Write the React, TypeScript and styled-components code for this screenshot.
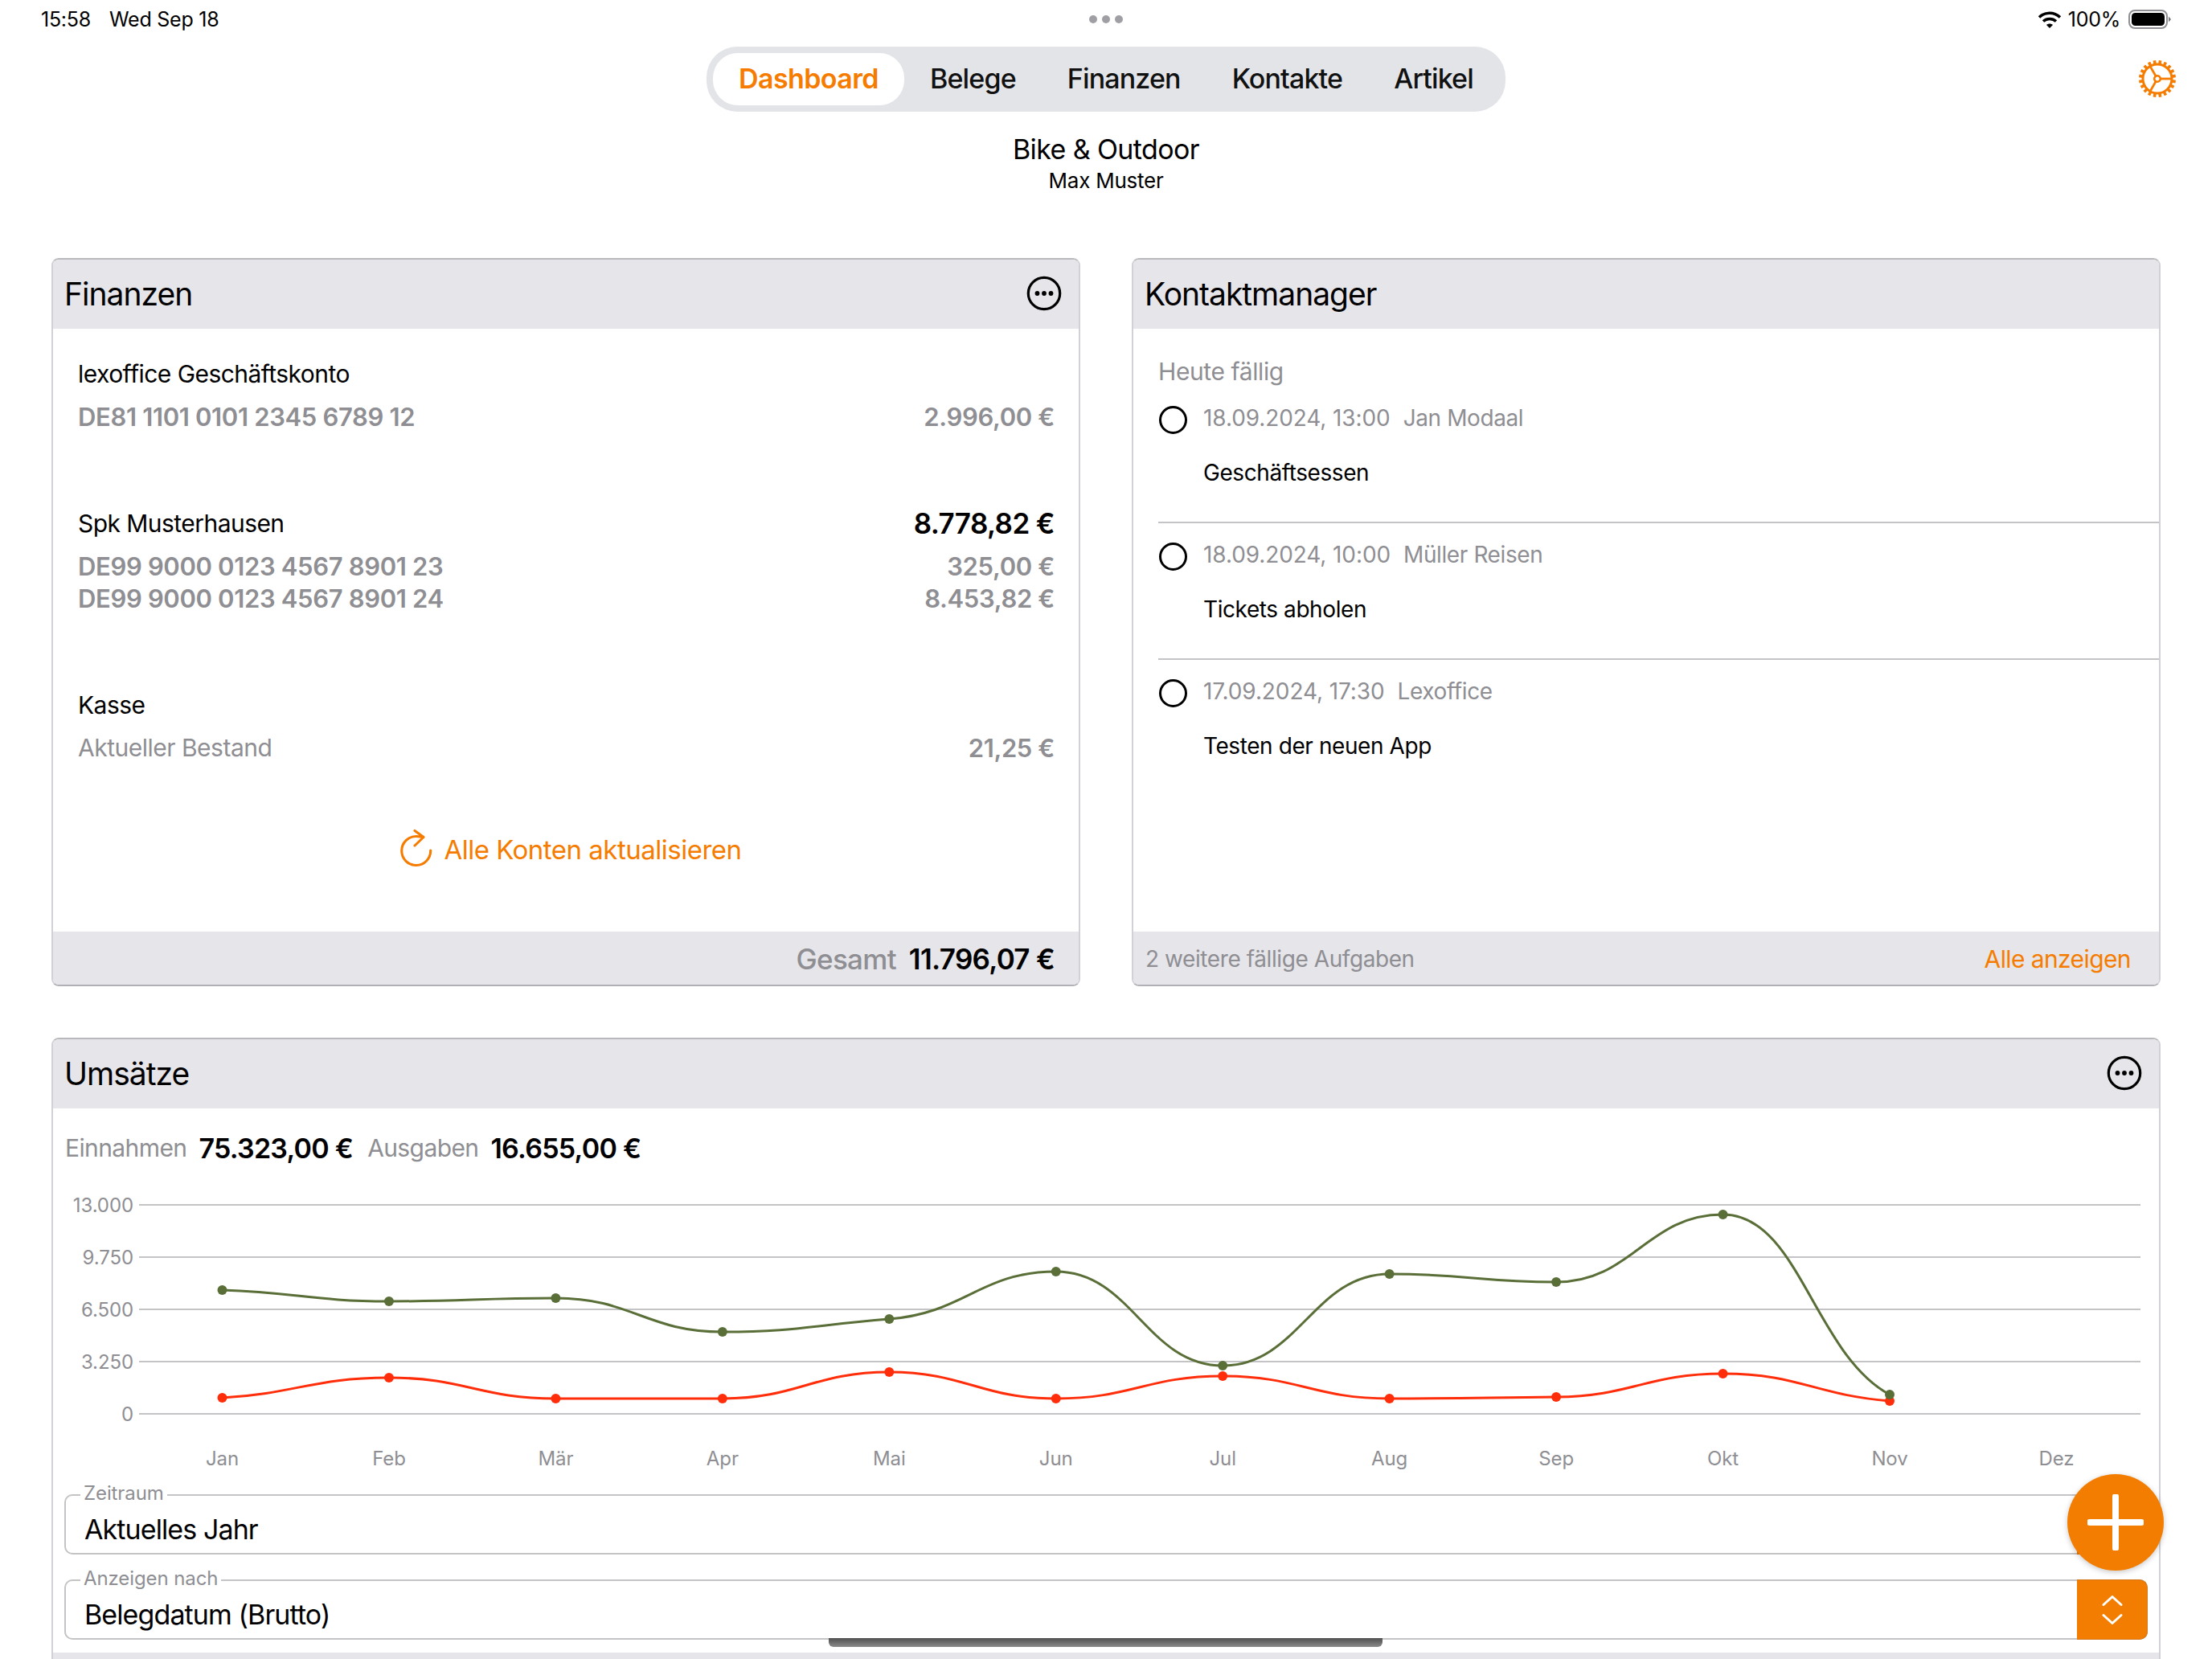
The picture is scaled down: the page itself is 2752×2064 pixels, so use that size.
import React from "react";
import styled, { createGlobalStyle } from "styled-components";

const ORANGE = "#f57c00";
const GREY = "#8e8e93";
const BAND = "#e5e5ea";
const LINE = "#c4c4c6";

const Global = createGlobalStyle`
  html, body { margin: 0; padding: 0; background: #fff; }
  body { font-family: Inter, "Liberation Sans", sans-serif; color: #000; }
  * { box-sizing: border-box; }
`;

const Page = styled.div`
  position: relative; width: 2752px; height: 2064px; overflow: hidden; background: #fff;
`;

const StatusBar = styled.div`
  display: flex; align-items: center; justify-content: space-between; height: 48px; padding: 0 50px 0 51px; position: relative;
`;
const StatusText = styled.span<{ $gap?: number }>`
  font-size: 25px; font-weight: 400; letter-spacing: -0.25px; line-height: 48px; margin-right: ${p => p.$gap ?? 0}px;
`;
const StatusGroup = styled.div`
  display: flex; align-items: center;
`;
const Dots = styled.div`
  position: absolute; left: 1355px; top: 19px; display: flex; gap: 6px;
`;
const Dot = styled.span`
  width: 10px; height: 10px; border-radius: 50%; background: #a0a0a4;
`;

const NavRow = styled.div`
  position: relative; display: flex; justify-content: center; margin-top: 10px; height: 81px;
`;
const Nav = styled.nav`
  display: flex; align-items: center; height: 81px; padding: 0 8px; background: #e3e4e8; border-radius: 38px;
`;
const NavItem = styled.div<{ $active?: boolean }>`
  height: 65px; display: flex; align-items: center; padding: 0 32px 2px; border-radius: 31px;
  font-size: 34px; font-weight: ${p => (p.$active ? 600 : 500)}; letter-spacing: ${p => (p.$active ? -0.6 : -0.85)}px;
  color: ${p => (p.$active ? ORANGE : "#111")};
  background: ${p => (p.$active ? "#fff" : "transparent")};
`;
const GearSlot = styled.div`
  position: absolute; right: 43px; top: 15px; width: 50px; height: 50px;
`;

const Company = styled.div`
  margin-top: 25px; text-align: center;
`;
const CompanyName = styled.div`
  font-size: 34px; line-height: 44px; font-weight: 400; letter-spacing: -0.6px;
`;
const Person = styled.div`
  margin-top: 1px; font-size: 26px; line-height: 32px; letter-spacing: -0.25px;
`;

const PanelGrid = styled.div`
  display: grid; grid-template-columns: 1fr 1fr; gap: 64px; margin-top: 80px; padding: 0 64px;
`;
const Panel = styled.section<{ $h?: number }>`
  display: flex; flex-direction: column; ${p => (p.$h ? `height: ${p.$h}px;` : "")}
  border: 2px solid #d1d1d6; border-top-color: #b9b9bd; border-bottom-color: #b0b0b6; border-radius: 9px; overflow: hidden; background: #fff;
`;
const WidePanel = styled(Panel)`
  margin: 64px 64px 0; border-bottom: 0;
`;
const PanelHead = styled.header`
  flex: none; display: flex; align-items: center; justify-content: space-between; height: 86px; padding: 0 21px 2px 14px; background: ${BAND};
`;
const PanelTitle = styled.h2`
  margin: 0; font-size: 39px; font-weight: 400; letter-spacing: -1px;
`;
const PanelFoot = styled.footer`
  flex: none; margin-top: auto; display: flex; align-items: center; justify-content: space-between; height: 66px; padding: 2px 30px 0 15px; background: ${BAND};
`;

const AccountsBody = styled.div`
  padding: 23px 30px 0 31px; display: flex; flex-direction: column; gap: 80px;
`;
const Account = styled.div``;
const AccountHead = styled.div`
  display: flex; justify-content: space-between; align-items: center; height: 66px;
`;
const AccountName = styled.span`
  font-size: 30px; letter-spacing: -0.55px;
`;
const Balance = styled.span`
  font-size: 35px; font-weight: 600; letter-spacing: -0.6px;
`;
const AccountLine = styled.div<{ $light?: boolean }>`
  display: flex; justify-content: space-between; align-items: center; height: 40px;
  font-size: ${p => (p.$light ? 30 : 31)}px; font-weight: ${p => (p.$light ? 400 : 600)}; color: ${GREY};
  letter-spacing: ${p => (p.$light ? -0.5 : -0.35)}px;
`;
const AccountAmount = styled.span`
  font-size: 31px; font-weight: 600; letter-spacing: -0.4px;
`;
const RefreshRow = styled.div`
  display: flex; align-items: center; justify-content: center; gap: 13px; height: 60px; margin-top: 77px; padding-left: 12px;
  font-size: 33px; color: ${ORANGE}; letter-spacing: -0.5px;
`;
const TotalWrap = styled.div`
  margin-left: auto; display: flex; align-items: center; gap: 16px; font-size: 35px; letter-spacing: -0.7px;
`;
const TotalLabel = styled.span`
  font-weight: 500; color: ${GREY};
`;
const TotalValue = styled.span`
  font-weight: 600;
`;

const TasksBody = styled.div`
  padding: 33px 0 0 31px;
`;
const TasksHead = styled.div`
  height: 39px; line-height: 40px; font-size: 30px; color: ${GREY}; letter-spacing: -0.4px;
`;
const Task = styled.div<{ $last?: boolean }>`
  padding: 19px 0 ${p => (p.$last ? 0 : 41)}px;
  border-bottom: ${p => (p.$last ? "0" : `2px solid ${LINE}`)};
`;
const TaskTop = styled.div`
  display: flex; align-items: center; gap: 20px; height: 40px;
`;
const TaskCircle = styled.span`
  flex: none; width: 35px; height: 35px; margin: 4px 0 0 1px; border-radius: 50%; border: 3.5px solid #000;
`;
const TaskMeta = styled.span`
  font-size: 28px; color: ${GREY}; letter-spacing: -0.1px;
`;
const TaskWho = styled.span`
  margin-left: 16px; letter-spacing: -0.4px;
`;
const TaskText = styled.div`
  margin: 28px 0 0 56px; height: 40px; line-height: 40px; font-size: 28px; letter-spacing: -0.42px;
`;
const FootNote = styled.span`
  font-size: 28px; color: ${GREY}; letter-spacing: -0.42px;
`;
const FootLink = styled.span`
  font-size: 30px; color: ${ORANGE}; letter-spacing: -0.6px;
  margin-right: 5px;
`;

const Summary = styled.div`
  display: flex; align-items: center; height: 50px; margin: 24px 0 0 15px;
`;
const SumLabel = styled.span`
  font-size: 30px; color: ${GREY}; letter-spacing: -0.6px; margin-right: 15px;
`;
const SumValue = styled.span`
  font-size: 34px; font-weight: 600; letter-spacing: -0.75px; margin-right: 18px;
`;
const ChartSvg = styled.svg`
  display: block; margin-top: 17px; width: 2620px; height: 370px;
`;
const AxisText = styled.text`
  font-family: Inter, "Liberation Sans", sans-serif; font-size: 24px; fill: ${GREY}; letter-spacing: -0.1px;
`;

const Field = styled.div<{ $top: number }>`
  position: relative; display: flex; align-items: stretch; height: 75px;
  margin: ${p => p.$top}px 14px 0 14px; border: 2px solid ${LINE}; border-radius: 10px;
`;
const FieldLabel = styled.span`
  position: absolute; left: 18px; top: -18px; padding: 0 4px; background: #fff; line-height: 30px;
  font-size: 24px; color: ${GREY}; letter-spacing: -0.1px;
`;
const FieldValue = styled.div`
  flex: 1; padding: 12px 0 0 23px; line-height: 60px; font-size: 34px; letter-spacing: -0.9px; height: 71px;
`;
const SelectBtn = styled.div`
  flex: none; width: 88px; margin: -2px -2px -2px 0; display: flex; align-items: center; justify-content: center;
  background: #f27d00; border-radius: 0 10px 10px 0; border: 1px solid #d2781a; border-left: 0;
`;
const WideSpacer = styled.div`
  height: 16px;
`;
const WideFoot = styled.div`
  height: 30px; background: ${BAND};
`;
const Fab = styled.button`
  position: absolute; left: 2572px; top: 1834px; width: 120px; height: 120px; padding: 0; border: 0; border-radius: 50%;
  background: #f27d00; box-shadow: 0 2px 7px rgba(0,0,0,.22); display: flex; align-items: center; justify-content: center;
`;
const HomeBar = styled.div`
  position: absolute; left: 1031px; top: 2038px; width: 689px; height: 11px; border-radius: 0 0 6px 6px;
  background: linear-gradient(#505050, #8a8a8a);
`;

const StatusIcons = () => (
  <>
    <svg width="30" height="22" viewBox="0 0 30 22" style={{ marginRight: 8 }} aria-hidden>
      <g fill="none" stroke="#000" strokeWidth="3.6">
        <path d="M2 8.5C9.5 1.5 20.5 1.5 28 8.5" />
        <path d="M7 13.5C11.5 9.5 18.5 9.5 23 13.5" />
      </g>
      <path d="M11 18C13.2 16 16.8 16 19 18L15 22Z" fill="#000" />
    </svg>
    <StatusText $gap={10}>100%</StatusText>
    <svg width="54" height="24" viewBox="0 0 54 24" aria-hidden>
      <rect x="1" y="1" width="47" height="22" rx="7" fill="none" stroke="#8e8e93" strokeWidth="2" />
      <rect x="4" y="4" width="41" height="16" rx="4.5" fill="#000" />
      <path d="M50 8.5L53 12L50 15.5Z" fill="#777" />
    </svg>
  </>
);

const Gear = () => {
  const teeth = Array.from({ length: 20 }, (_, i) => i * 18);
  const rad = (d: number) => (d * Math.PI) / 180;
  return (
    <svg width="50" height="50" viewBox="-25 -25 50 50" aria-hidden>
      <g stroke={ORANGE} fill="none">
        <circle r="18" strokeWidth="3" />
        <circle r="3.8" strokeWidth="2.6" />
        {teeth.map(a => (
          <line key={a} x1={18 * Math.cos(rad(a + 9))} y1={18 * Math.sin(rad(a + 9))} x2={23 * Math.cos(rad(a + 9))} y2={23 * Math.sin(rad(a + 9))} strokeWidth="3.6" />
        ))}
        {[0, 120, 240].map(a => (
          <line key={a} x1={4 * Math.cos(rad(a))} y1={4 * Math.sin(rad(a))} x2={18 * Math.cos(rad(a))} y2={18 * Math.sin(rad(a))} strokeWidth="2.8" />
        ))}
      </g>
    </svg>
  );
};

const MoreIcon = () => (
  <svg width="44" height="44" viewBox="0 0 44 44" aria-hidden>
    <circle cx="22" cy="22" r="19.7" fill="none" stroke="#000" strokeWidth="3.2" />
    <circle cx="13.5" cy="22" r="2.9" />
    <circle cx="22" cy="22" r="2.9" />
    <circle cx="30.5" cy="22" r="2.9" />
  </svg>
);

const RefreshIcon = () => (
  <svg width="42" height="50" viewBox="0 0 42 50" style={{ marginTop: -2 }} aria-hidden>
    <path d="M38.7 27A18 18 0 1 1 21 9.5L30 10.5M19 2.5L30 10.5L19 21" fill="none" stroke={ORANGE} strokeWidth="3.1" strokeLinecap="round" strokeLinejoin="round" />
  </svg>
);

const monotone = (pts: [number, number][]) => {
  const n = pts.length;
  const dx = pts.slice(1).map((p, i) => p[0] - pts[i][0]);
  const s = pts.slice(1).map((p, i) => (p[1] - pts[i][1]) / dx[i]);
  const m = pts.map((_, i) => {
    if (i === 0) return s[0] / 2;
    if (i === n - 1) return s[n - 2] / 2;
    if (s[i - 1] * s[i] <= 0) return 0;
    const sign = s[i] > 0 ? 1 : -1;
    return sign * Math.min(Math.abs(s[i - 1]), Math.abs(s[i]), 0.5 * Math.abs(s[i - 1] + s[i]));
  });
  let d = `M${pts[0][0]} ${pts[0][1]}`;
  for (let i = 0; i < n - 1; i++) {
    const h = dx[i] / 2.2;
    d += `C${pts[i][0] + h} ${pts[i][1] + m[i] * h} ${pts[i + 1][0] - h} ${pts[i + 1][1] - m[i + 1] * h} ${pts[i + 1][0]} ${pts[i + 1][1]}`;
  }
  return d;
};

const MONTHS = ["Jan", "Feb", "Mär", "Apr", "Mai", "Jun", "Jul", "Aug", "Sep", "Okt", "Nov", "Dez"];
const monthX = (i: number) => 276.5 + i * 207.45;
const GREEN_Y = [1605, 1619, 1615, 1657, 1641, 1582, 1699, 1585, 1595, 1511, 1735];
const RED_Y = [1739, 1714, 1740, 1740, 1707, 1740, 1712, 1740, 1738, 1709, 1743];
const GRID: [string, number][] = [["13.000", 1499], ["9.750", 1564], ["6.500", 1629], ["3.250", 1694], ["0", 1759]];

const Series = ({ ys, color }: { ys: number[]; color: string }) => {
  const pts = ys.map((y, i) => [monthX(i), y] as [number, number]);
  return (
    <g>
      <path d={monotone(pts)} fill="none" stroke={color} strokeWidth="3" />
      {pts.map(([x, y]) => <circle key={x} cx={x} cy={y} r="6" fill={color} />)}
    </g>
  );
};

const Chart = () => (
  <ChartSvg viewBox="66 1470 2620 370" aria-label="Umsätze">
    {GRID.map(([t, y]) => (
      <g key={t}>
        <line x1="173" x2="2663" y1={y} y2={y} stroke={LINE} strokeWidth="2" />
        <AxisText x="166" y={y + 9} textAnchor="end">{t}</AxisText>
      </g>
    ))}
    {MONTHS.map((m, i) => (
      <AxisText key={m} x={monthX(i)} y="1823" textAnchor="middle">{m}</AxisText>
    ))}
    <Series ys={RED_Y} color="#ff2d0a" />
    <Series ys={GREEN_Y} color="#5a6e38" />
  </ChartSvg>
);

const TASKS = [
  { when: "18.09.2024, 13:00", who: "Jan Modaal", text: "Geschäftsessen" },
  { when: "18.09.2024, 10:00", who: "Müller Reisen", text: "Tickets abholen" },
  { when: "17.09.2024, 17:30", who: "Lexoffice", text: "Testen der neuen App" },
];

export default function App() {
  return (
    <Page>
      <Global />
      <StatusBar>
        <StatusGroup>
          <StatusText $gap={23}>15:58</StatusText>
          <StatusText>Wed Sep 18</StatusText>
        </StatusGroup>
        <Dots><Dot /><Dot /><Dot /></Dots>
        <StatusGroup><StatusIcons /></StatusGroup>
      </StatusBar>

      <NavRow>
        <Nav>
          <NavItem $active>Dashboard</NavItem>
          <NavItem>Belege</NavItem>
          <NavItem>Finanzen</NavItem>
          <NavItem>Kontakte</NavItem>
          <NavItem>Artikel</NavItem>
        </Nav>
        <GearSlot><Gear /></GearSlot>
      </NavRow>

      <Company>
        <CompanyName>Bike &amp; Outdoor</CompanyName>
        <Person>Max Muster</Person>
      </Company>

      <PanelGrid>
        <Panel $h={906}>
          <PanelHead>
            <PanelTitle>Finanzen</PanelTitle>
            <MoreIcon />
          </PanelHead>
          <AccountsBody>
            <Account>
              <AccountHead><AccountName>lexoffice Geschäftskonto</AccountName></AccountHead>
              <AccountLine><span>DE81 1101 0101 2345 6789 12</span><span>2.996,00 €</span></AccountLine>
            </Account>
            <Account>
              <AccountHead><AccountName>Spk Musterhausen</AccountName><Balance>8.778,82 €</Balance></AccountHead>
              <AccountLine><span>DE99 9000 0123 4567 8901 23</span><span>325,00 €</span></AccountLine>
              <AccountLine><span>DE99 9000 0123 4567 8901 24</span><span>8.453,82 €</span></AccountLine>
            </Account>
            <Account>
              <AccountHead><AccountName>Kasse</AccountName></AccountHead>
              <AccountLine $light><span>Aktueller Bestand</span><AccountAmount>21,25 €</AccountAmount></AccountLine>
            </Account>
          </AccountsBody>
          <RefreshRow><RefreshIcon />Alle Konten aktualisieren</RefreshRow>
          <PanelFoot>
            <TotalWrap><TotalLabel>Gesamt</TotalLabel><TotalValue>11.796,07 €</TotalValue></TotalWrap>
          </PanelFoot>
        </Panel>

        <Panel $h={906}>
          <PanelHead><PanelTitle>Kontaktmanager</PanelTitle></PanelHead>
          <TasksBody>
            <TasksHead>Heute fällig</TasksHead>
            {TASKS.map((t, i) => (
              <Task key={t.when} $last={i === TASKS.length - 1}>
                <TaskTop>
                  <TaskCircle />
                  <TaskMeta>{t.when}<TaskWho>{t.who}</TaskWho></TaskMeta>
                </TaskTop>
                <TaskText>{t.text}</TaskText>
              </Task>
            ))}
          </TasksBody>
          <PanelFoot>
            <FootNote>2 weitere fällige Aufgaben</FootNote>
            <FootLink>Alle anzeigen</FootLink>
          </PanelFoot>
        </Panel>
      </PanelGrid>

      <WidePanel>
        <PanelHead>
          <PanelTitle>Umsätze</PanelTitle>
          <MoreIcon />
        </PanelHead>
        <Summary>
          <SumLabel>Einnahmen</SumLabel><SumValue>75.323,00 €</SumValue>
          <SumLabel>Ausgaben</SumLabel><SumValue>16.655,00 €</SumValue>
        </Summary>
        <Chart />
        <Field $top={19}>
          <FieldLabel>Zeitraum</FieldLabel>
          <FieldValue>Aktuelles Jahr</FieldValue>
          <SelectBtn />
        </Field>
        <Field $top={31}>
          <FieldLabel>Anzeigen nach</FieldLabel>
          <FieldValue>Belegdatum (Brutto)</FieldValue>
          <SelectBtn>
            <svg width="30" height="36" viewBox="0 0 30 36" aria-hidden>
              <path d="M4 11.5L15 1.5L26 11.5M4 24.5L15 34.5L26 24.5" fill="none" stroke="#fff" strokeWidth="3" strokeLinecap="round" strokeLinejoin="round" />
            </svg>
          </SelectBtn>
        </Field>
        <WideSpacer />
        <WideFoot />
      </WidePanel>

      <Fab aria-label="Neu">
        <svg width="70" height="70" viewBox="0 0 70 70" aria-hidden>
          <path d="M35 3V67M3 35H67" stroke="#fff" strokeWidth="8" strokeLinecap="round" />
        </svg>
      </Fab>
      <HomeBar />
    </Page>
  );
}
